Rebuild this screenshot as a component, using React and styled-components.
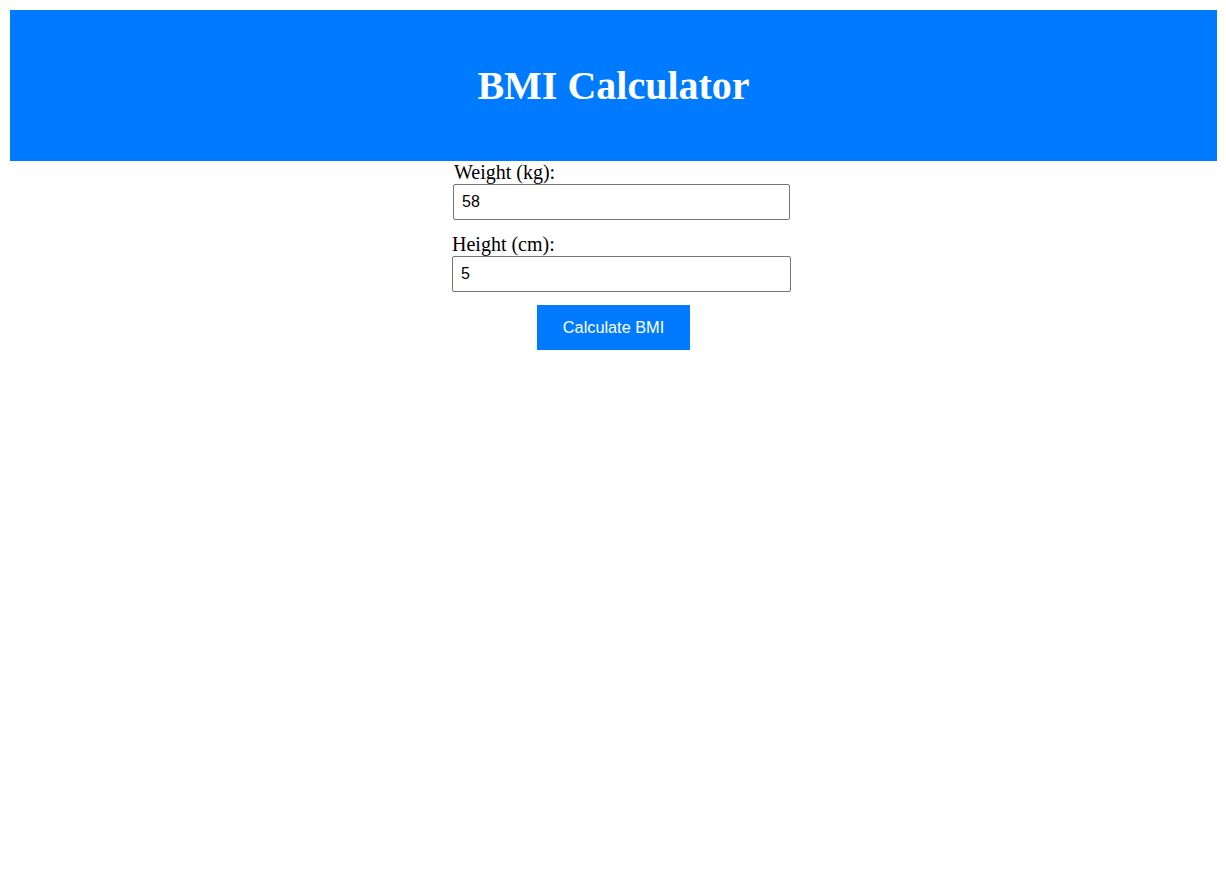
import React, { useState } from 'react';
import styled, { createGlobalStyle } from 'styled-components';

const GlobalStyle = createGlobalStyle`
  body {
    margin: 0;
    background: #ffffff;
    font-family: "Liberation Serif", "Times New Roman", serif;
  }
`;

const Page = styled.div`
  padding: 10px 10px 10px 10px;
`;

const Header = styled.header`
  display: flex;
  align-items: center;
  justify-content: center;
  height: 151px;
  margin-right: -1px;
  background: #007bff;
  color: #ffffff;
`;

const Title = styled.h1`
  margin: 0;
  font-size: 40px;
  line-height: 46px;
  font-weight: bold;
`;

const Form = styled.form`
  display: flex;
  flex-direction: column;
  align-items: center;
`;

const Fields = styled.div`
  display: flex;
  flex-direction: column;
  width: 339px;
  margin-left: 17px;
`;

const Field = styled.div`
  display: flex;
  flex-direction: column;
  padding: 0 ${(p) => (p.$inset ? '1px' : '0')};
  margin-bottom: 13px;
`;

const Label = styled.label`
  font-size: 20px;
  line-height: 23px;
  color: #000000;
  padding-left: ${(p) => (p.$inset ? '1px' : '0')};
`;

const Input = styled.input`
  box-sizing: border-box;
  width: 100%;
  height: 36px;
  padding: 0 8px;
  border: 1px solid #767676;
  border-radius: 2px;
  font-family: "Liberation Sans", Arial, sans-serif;
  font-size: 16px;
  color: #000000;
  outline: none;
`;

const Button = styled.button`
  box-sizing: border-box;
  width: 153px;
  height: 45px;
  padding: 0;
  margin-left: 1px;
  border: none;
  background: #007bff;
  color: #ffffff;
  font-family: "Liberation Sans", Arial, sans-serif;
  font-size: 16.3px;
  cursor: pointer;
`;

export default function App() {
  const [weight, setWeight] = useState('58');
  const [height, setHeight] = useState('5');

  return (
    <Page>
      <GlobalStyle />
      <Header>
        <Title>BMI Calculator</Title>
      </Header>
      <Form onSubmit={(e) => e.preventDefault()}>
        <Fields>
          <Field $inset>
            <Label $inset htmlFor="weight">Weight (kg):</Label>
            <Input id="weight" value={weight} onChange={(e) => setWeight(e.target.value)} />
          </Field>
          <Field>
            <Label htmlFor="height">Height (cm):</Label>
            <Input id="height" value={height} onChange={(e) => setHeight(e.target.value)} />
          </Field>
        </Fields>
        <Button type="submit">Calculate BMI</Button>
      </Form>
    </Page>
  );
}
